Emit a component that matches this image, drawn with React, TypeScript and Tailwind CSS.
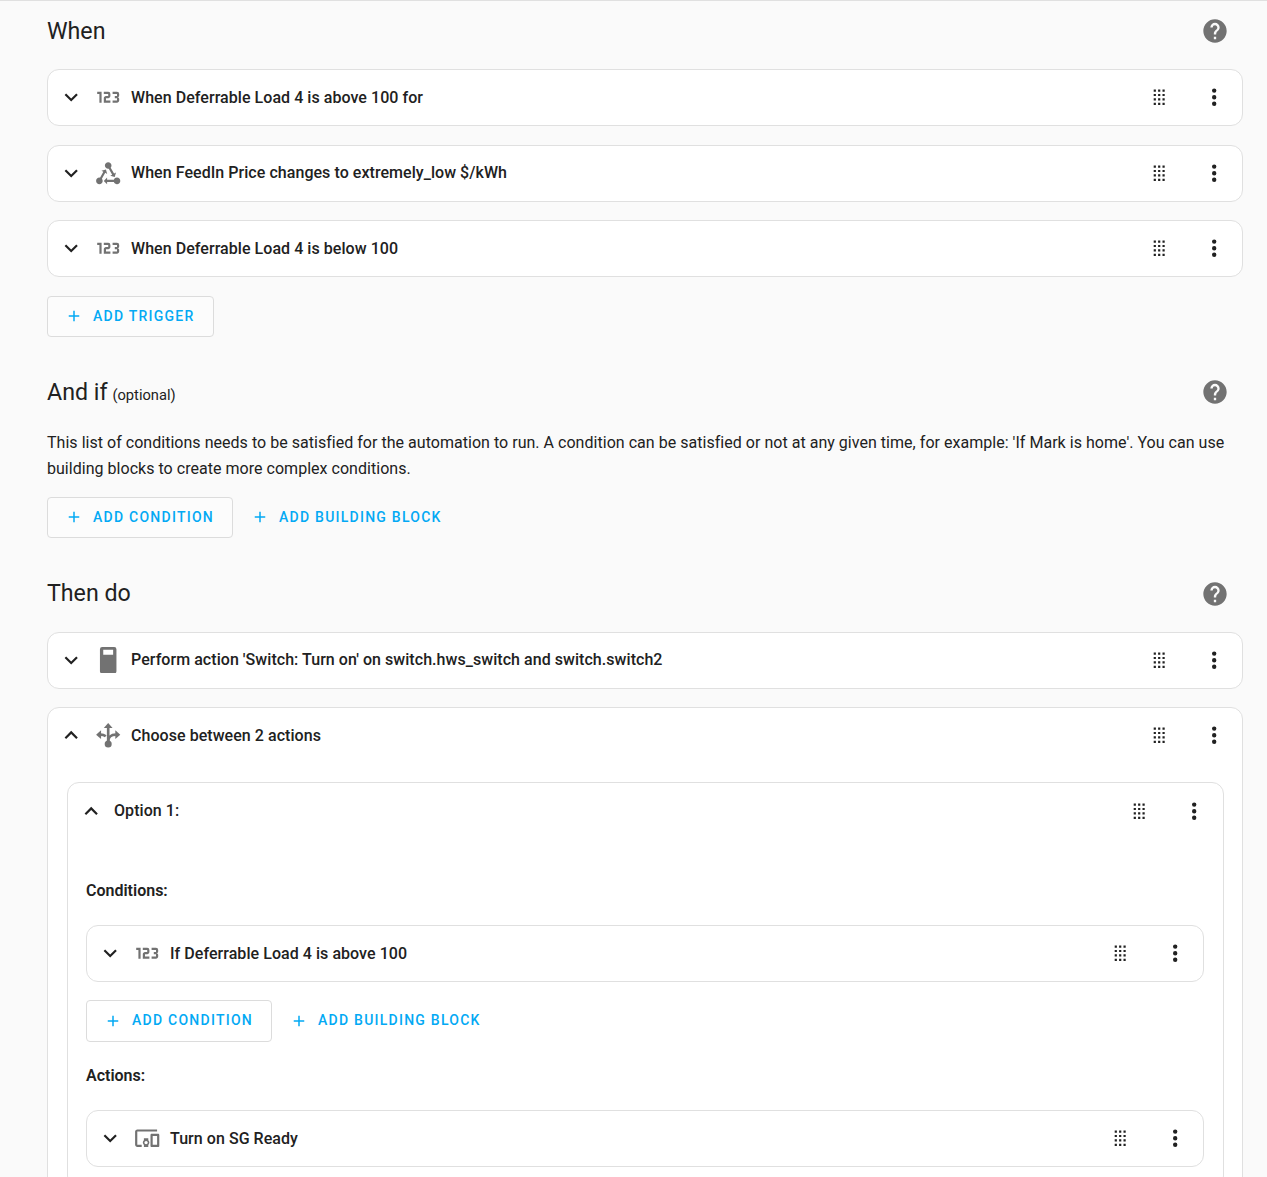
import React from 'react';

const P = {
  numeric: 'M4,17V9H2V7H6V17H4M22,15C22,16.11 21.1,17 20,17H16V15H20V13H18V11H20V9H16V7H20A2,2 0 0,1 22,9V10.5A1.5,1.5 0 0,1 20.5,12A1.5,1.5 0 0,1 22,13.5V15M14,15V17H8V13C8,11.89 8.9,11 10,11H12V9H8V7H12A2,2 0 0,1 14,9V11C14,12.11 13.1,13 12,13H10V15H14Z',
  state: 'M6.27 17.05C6.72 17.58 7 18.25 7 19C7 20.66 5.66 22 4 22S1 20.66 1 19 2.34 16 4 16C4.18 16 4.36 16 4.53 16.05L7.6 10.69L5.86 9.7L9.95 8.58L11.07 12.67L9.33 11.68L6.27 17.05M20 16C18.7 16 17.6 16.84 17.18 18H11V16L8 19L11 22V20H17.18C17.6 21.16 18.7 22 20 22C21.66 22 23 20.66 23 19S21.66 16 20 16M12 8C12.18 8 12.36 8 12.53 7.95L15.6 13.31L13.86 14.3L17.95 15.42L19.07 11.33L17.33 12.32L14.27 6.95C14.72 6.42 15 5.75 15 5C15 3.34 13.66 2 12 2S9 3.34 9 5 10.34 8 12 8Z',
  devices: 'M3 6H21V4H3C1.9 4 1 4.9 1 6V18C1 19.1 1.9 20 3 20H7V18H3V6M13 12H9V13.78C8.39 14.33 8 15.11 8 16C8 16.89 8.39 17.67 9 18.22V20H13V18.22C13.61 17.67 14 16.88 14 16S13.61 14.33 13 13.78V12M11 17.5C10.17 17.5 9.5 16.83 9.5 16S10.17 14.5 11 14.5 12.5 15.17 12.5 16 11.83 17.5 11 17.5M22 8H16C15.5 8 15 8.5 15 9V19C15 19.5 15.5 20 16 20H22C22.5 20 23 19.5 23 19V9C23 8.5 22.5 8 22 8M21 18H17V10H21V18Z',
  switchBox: 'M6.5 0H17.5A2 2 0 0 1 19.5 2V22A2 2 0 0 1 17.5 24H6.5A2 2 0 0 1 4.5 22V2A2 2 0 0 1 6.5 0M7.5 2.5V7H16.5V2.5H7.5Z',
  drag: 'M7,19V17H9V19H7M11,19V17H13V19H11M15,19V17H17V19H15M7,15V13H9V15H7M11,15V13H13V15H11M15,15V13H17V15H15M7,11V9H9V11H7M11,11V9H13V11H11M15,11V9H17V11H15M7,7V5H9V7H7M11,7V5H13V7H11M15,7V5H17V7H15Z',
  down: 'M7.41,8.58L12,13.17L16.59,8.58L18,10L12,16L6,10L7.41,8.58Z',
  up: 'M7.41,15.41L12,10.83L16.59,15.41L18,14L12,8L6,14L7.41,15.41Z',
  dots: 'M12,16A2,2 0 0,1 14,18A2,2 0 0,1 12,20A2,2 0 0,1 10,18A2,2 0 0,1 12,16M12,10A2,2 0 0,1 14,12A2,2 0 0,1 12,14A2,2 0 0,1 10,12A2,2 0 0,1 12,10M12,4A2,2 0 0,1 14,6A2,2 0 0,1 12,8A2,2 0 0,1 10,6A2,2 0 0,1 12,4Z',
  help: 'M15.07,11.25L14.17,12.17C13.45,12.89 13,13.5 13,15H11V14.5C11,13.39 11.45,12.39 12.17,11.67L13.41,10.41C13.78,10.05 14,9.55 14,9C14,7.89 13.1,7 12,7A2,2 0 0,0 10,9H8A4,4 0 0,1 12,5A4,4 0 0,1 16,9C16,9.88 15.64,10.67 15.07,11.25M13,19H11V17H13M12,2A10,10 0 0,0 2,12A10,10 0 0,0 12,22A10,10 0 0,0 22,12C22,6.47 17.5,2 12,2Z',
  plus: 'M19,13H13V19H11V13H5V11H11V5H13V11H19V13Z',
};

// icons in the picture are drawn a bit over 24px, the negative margin keeps the 24px slot
const BIG = 'w-[26.4px] h-[26.4px] -m-[1.2px] shrink-0';

const Icon = ({ d, className }: { d: string; className: string }) => (
  <svg viewBox="0 0 24 24" className={className} fill="currentColor">
    <path d={d} />
  </svg>
);

const ChooseIcon = () => (
  <svg viewBox="0 0 24 24" className={`${BIG} text-[#727272]`} fill="currentColor">
    <path d="M12 1L16 5.5H8Z" />
    <path d="M1 11.5L5.5 7.5V15.5Z" />
    <path d="M23 11.5L18.5 7.5V15.5Z" />
    <circle cx="12" cy="20" r="3.2" />
    <path d="M12 5V19" stroke="currentColor" strokeWidth="2.4" fill="none" />
    <path d="M12 17.5C12 14 14.5 11.5 19 11.5" stroke="currentColor" strokeWidth="2.4" fill="none" />
    <path d="M5 11.5C7 11.5 8.5 12 9.8 13" stroke="currentColor" strokeWidth="2.4" fill="none" />
  </svg>
);

const RowTail = () => (
  <div className="ml-auto flex items-center gap-[31px]">
    <Icon d={P.drag} className={`${BIG} text-[#212121]`} />
    <Icon d={P.dots} className={`${BIG} text-[#212121]`} />
  </div>
);

const RowHead = ({ icon, title, open, custom }: { icon?: string; title: string; open?: boolean; custom?: React.ReactNode }) => (
  <div className="h-[55px] flex items-center pl-[11px] pr-[15.5px]">
    <Icon d={open ? P.up : P.down} className={`${BIG} text-[#212121]`} />
    <div className="w-6 h-6 ml-[13px] flex items-center justify-center shrink-0">
      {custom ?? <Icon d={icon ?? ''} className={`${BIG} text-[#727272]`} />}
    </div>
    <span className="ml-[11px] text-[16px] font-medium text-[#212121] tracking-[0.05px]">{title}</span>
    <RowTail />
  </div>
);

const Card = ({ icon, title }: { icon: string; title: string }) => (
  <div className="border border-[#e0e0e0] rounded-xl bg-white">
    <RowHead icon={icon} title={title} />
  </div>
);

const AddButton = ({ label, outlined }: { label: string; outlined?: boolean }) => (
  <button className={`h-[41.5px] flex items-center pl-[17px] pr-[18px] rounded-[4px] text-[#03a9f4] ${outlined ? 'border border-[#dcdcdc] bg-white/40' : ''}`}>
    <Icon d={P.plus} className="w-[18px] h-[18px] mr-[10px] shrink-0" />
    <span className="text-[14px] font-medium tracking-[1.25px] uppercase">{label}</span>
  </button>
);

const SectionHead = ({ title, optional, textClass }: { title: string; optional?: boolean; textClass?: string }) => (
  <div className="flex items-center justify-between pr-[14px]">
    <h2 className={`text-[23.2px] leading-[32px] text-[#212121] ${textClass ?? ''}`}>
      {title}
      {optional && <span className="text-[14.7px] ml-[5px]">(optional)</span>}
    </h2>
    <Icon d={P.help} className="w-7 h-7 text-[#727272]" />
  </div>
);

const ConditionButtons = () => (
  <div className="flex items-center gap-[1px]">
    <AddButton label="Add condition" outlined />
    <AddButton label="Add building block" />
  </div>
);

export default function App() {
  return (
    <div className="h-screen overflow-hidden bg-[#fafafa] border-t border-[#e0e0e0] pl-[47px] pr-[24px] pt-[14px]" style={{ fontFamily: 'Roboto, sans-serif' }}>
      <SectionHead title="When" />
      <div className="mt-[22px] flex flex-col gap-[18.5px]">
        <Card icon={P.numeric} title="When Deferrable Load 4 is above 100 for" />
        <Card icon={P.state} title="When FeedIn Price changes to extremely_low $/kWh" />
        <Card icon={P.numeric} title="When Deferrable Load 4 is below 100" />
      </div>
      <div className="mt-[18.5px] flex">
        <AddButton label="Add trigger" outlined />
      </div>

      <div className="mt-[36.5px]">
        <SectionHead title="And if" optional textClass="pt-[2px]" />
      </div>
      <p className="mt-[19px] text-[16px] leading-[26px] text-[#212121] tracking-[0.03px]">
        This list of conditions needs to be satisfied for the automation to run. A condition can be satisfied or not at any given time, for example: 'If Mark is home'. You can use building blocks to create more complex conditions.
      </p>
      <div className="mt-[15px]">
        <ConditionButtons />
      </div>

      <div className="mt-[39px]">
        <SectionHead title="Then do" textClass="pb-[1px]" />
      </div>
      <div className="mt-[21.5px] flex flex-col gap-[18.5px]">
        <Card icon={P.switchBox} title="Perform action 'Switch: Turn on' on switch.hws_switch and switch.switch2" />

        <div className="border border-[#e0e0e0] rounded-xl bg-white">
          <RowHead custom={<ChooseIcon />} title="Choose between 2 actions" open />
          <div className="pl-[19px] pr-[18px] pb-5 pt-[19px]">
            <div className="border border-[#e0e0e0] rounded-xl bg-white">
              <div className="h-[56px] flex items-center pl-[11px] pr-[16.5px]">
                <Icon d={P.up} className={`${BIG} text-[#212121]`} />
                <span className="ml-[11px] text-[16px] font-medium text-[#212121] tracking-[0.05px]">Option 1:</span>
                <RowTail />
              </div>
              <div className="pl-[18px] pr-[19px] pt-[40px] pb-5">
                <div className="text-[16px] leading-[24px] font-semibold text-[#212121]">Conditions:</div>
                <div className="mt-[22px]">
                  <Card icon={P.numeric} title="If Deferrable Load 4 is above 100" />
                </div>
                <div className="mt-[18px]">
                  <ConditionButtons />
                </div>
                <div className="mt-[22.5px] text-[16px] leading-[24px] font-semibold text-[#212121]">Actions:</div>
                <div className="mt-[22px]">
                  <Card icon={P.devices} title="Turn on SG Ready" />
                </div>
              </div>
            </div>
          </div>
        </div>
      </div>
    </div>
  );
}
